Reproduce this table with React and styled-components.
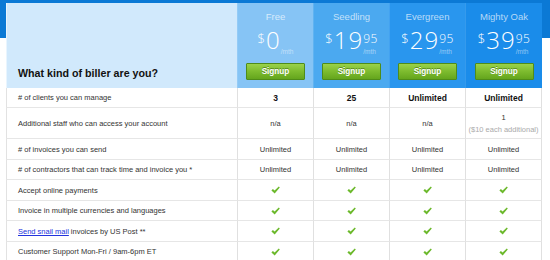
import React from 'react';
import styled, { createGlobalStyle } from 'styled-components';

const plans = [
  { name: 'Free', dollars: '0', cents: '', bg: '#86c4f5' },
  { name: 'Seedling', dollars: '19', cents: '95', bg: '#4ba9f0' },
  { name: 'Evergreen', dollars: '29', cents: '95', bg: '#2996ee' },
  { name: 'Mighty Oak', dollars: '39', cents: '95', bg: '#1a8cea' },
];

const rows = [
  { label: '# of clients you can manage', values: ['3', '25', 'Unlimited', 'Unlimited'], bold: true, h: 20 },
  { label: 'Additional staff who can access your account', values: ['n/a', 'n/a', 'n/a', '1'], note: '($10 each additional)', h: 31 },
  { label: '# of invoices you can send', values: ['Unlimited', 'Unlimited', 'Unlimited', 'Unlimited'], h: 21 },
  { label: '# of contractors that can track time and invoice you *', values: ['Unlimited', 'Unlimited', 'Unlimited', 'Unlimited'], h: 20 },
  { label: 'Accept online payments', check: true, h: 21 },
  { label: 'Invoice in multiple currencies and languages', check: true, h: 20 },
  { label: 'invoices by US Post **', link: 'Send snail mail', check: true, h: 21 },
  { label: 'Customer Support Mon-Fri / 9am-6pm ET', check: true, h: 20 },
];

const GlobalStyle = createGlobalStyle`
  html, body {
    margin: 0;
    padding: 0;
  }
  body {
    width: 550px;
    height: 260px;
    overflow: hidden;
    font-family: "Liberation Sans", Arial, sans-serif;
    background: linear-gradient(to bottom, #0b79d5 0, #0b79d5 38px, #ffffff 38px);
  }
`;

const Page = styled.div`
  padding: 3px 0 0 6px;
`;

const Table = styled.div`
  display: grid;
  grid-template-columns: 231px 76px 76px 76px 77px;
  width: 536px;
`;

const Corner = styled.div`
  height: 85px;
  box-sizing: border-box;
  background: #d1e9fc;
  border-left: 1px solid #e9f5fe;
  display: flex;
  flex-direction: column;
  justify-content: flex-end;
  padding: 0 0 8px 11px;
`;

const Title = styled.h1`
  margin: 0;
  font-size: 10.7px;
  line-height: 13px;
  font-weight: bold;
  color: #111;
`;

const PlanHead = styled.div`
  height: 85px;
  box-sizing: border-box;
  background: ${(p) => p.$bg};
  border-left: 1px solid rgba(255, 255, 255, 0.12);
  display: flex;
  flex-direction: column;
  align-items: center;
  padding: 7px 0 8px;
  color: #fff;
`;

const PlanName = styled.div`
  font-size: 9.5px;
  line-height: 14px;
  color: rgba(255, 255, 255, 0.68);
`;

const Price = styled.div`
  display: flex;
  align-items: stretch;
  margin-top: 8px;
  height: 23px;
`;

const Currency = styled.span`
  font-family: "Open Sans", "Liberation Sans", sans-serif;
  font-weight: 300;
  font-size: 13px;
  line-height: 12px;
  margin-right: 1px;
`;

const Amount = styled.span`
  font-family: "Open Sans", "Liberation Sans", sans-serif;
  font-weight: 300;
  font-size: 24px;
  line-height: 16px;
  letter-spacing: 1px;
`;

const Side = styled.span`
  display: flex;
  flex-direction: column;
  justify-content: ${(p) => (p.$only ? 'flex-end' : 'space-between')};
`;

const Cents = styled.span`
  font-family: "Open Sans", "Liberation Sans", sans-serif;
  font-weight: 300;
  font-size: 12px;
  line-height: 11px;
  letter-spacing: 0.4px;
  margin-top: 1px;
`;

const Per = styled.span`
  font-size: 6.5px;
  line-height: 7px;
  color: rgba(255, 255, 255, 0.5);
`;

const Signup = styled.button`
  margin-top: auto;
  width: 59px;
  height: 17px;
  padding: 0;
  border: 1px solid #4f8c19;
  border-radius: 1px;
  background: linear-gradient(to bottom, #9ad24a 0%, #7dbb2e 50%, #64a51d 100%);
  color: #fff;
  font-family: "Liberation Sans", Arial, sans-serif;
  font-size: 8.2px;
  font-weight: bold;
  text-shadow: 0 -1px 0 rgba(40, 80, 10, 0.5);
  cursor: pointer;
`;

const Label = styled.div`
  height: ${(p) => p.$h}px;
  box-sizing: border-box;
  border-left: 1px solid #e2e2e2;
  border-bottom: 1px solid #e6e6e6;
  display: flex;
  align-items: center;
  padding-left: 11px;
  font-size: 7.5px;
  color: #333;
`;

const Value = styled.div`
  height: ${(p) => p.$h}px;
  box-sizing: border-box;
  border-left: 1px solid #e0e0e0;
  border-right: ${(p) => (p.$last ? '1px solid #e0e0e0' : 'none')};
  border-bottom: 1px solid #e6e6e6;
  display: flex;
  flex-direction: column;
  align-items: center;
  justify-content: center;
  font-size: ${(p) => (p.$bold ? '8.5px' : '7.5px')};
  font-weight: ${(p) => (p.$bold ? 'bold' : 'normal')};
  color: ${(p) => (p.$bold ? '#111' : '#333')};
`;

const Note = styled.div`
  font-size: 7.5px;
  color: #aaa;
  margin-top: 3px;
`;

const SnailLink = styled.a`
  color: #2233dd;
  text-decoration: underline;
  margin-right: 2px;
`;

function Check() {
  return (
    <svg width="9" height="8" viewBox="0 0 9 8">
      <path d="M0.4 4.4 L1.9 3 L3.6 4.6 L7.8 0.4 L8.8 1.6 L3.7 7.6 Z" fill="#6cb92c" />
    </svg>
  );
}

export default function App() {
  return (
    <>
      <GlobalStyle />
      <Page>
        <Table>
          <Corner>
            <Title>What kind of biller are you?</Title>
          </Corner>
          {plans.map((p) => (
            <PlanHead key={p.name} $bg={p.bg}>
              <PlanName>{p.name}</PlanName>
              <Price>
                <Currency>$</Currency>
                <Amount>{p.dollars}</Amount>
                <Side $only={!p.cents}>
                  {p.cents && <Cents>{p.cents}</Cents>}
                  <Per>/mth</Per>
                </Side>
              </Price>
              <Signup>Signup</Signup>
            </PlanHead>
          ))}
          {rows.map((r) => (
            <React.Fragment key={r.label}>
              <Label $h={r.h}>
                {r.link && <SnailLink href="#">{r.link}</SnailLink>}
                {r.label}
              </Label>
              {[0, 1, 2, 3].map((i) => (
                <Value key={i} $h={r.h} $bold={r.bold} $last={i === 3}>
                  {r.check ? <Check /> : r.values[i]}
                  {r.note && i === 3 && <Note>{r.note}</Note>}
                </Value>
              ))}
            </React.Fragment>
          ))}
        </Table>
      </Page>
    </>
  );
}
